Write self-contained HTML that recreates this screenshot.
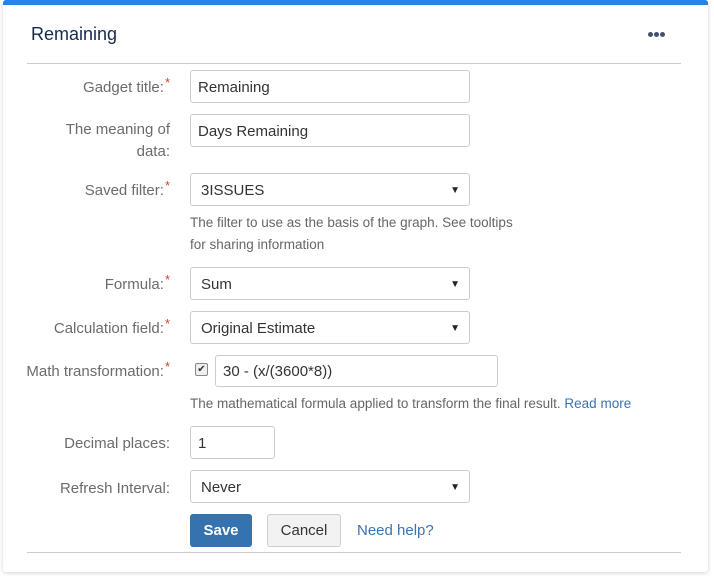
<!DOCTYPE html>
<html><head><style>
body{margin:0;width:714px;height:581px;background:#fff;font-family:"Liberation Sans",Arial,sans-serif;position:relative;overflow:hidden}
.card{position:absolute;left:3px;top:0;width:705px;height:572px;background:#fff;border-radius:3px;box-shadow:0 1px 4px rgba(0,0,0,.18);border-top:5px solid #2684e8;box-sizing:border-box}
.a{position:absolute}
.lbl{position:absolute;right:544px;font-size:15px;color:#6b6b6b;text-align:right;line-height:22px}
.lbl i{color:#d04437;font-style:normal;font-size:13px;position:relative;top:-5px;margin-left:1px}
.in{position:absolute;left:190px;width:280px;height:33px;border:1px solid #ccc;border-radius:3px;box-sizing:border-box;font-size:15px;color:#333;padding:0 7px;line-height:33px;background:#fff}
.sel{padding-left:10px}
.sel:after{content:"▼";position:absolute;right:9px;top:0;font-size:10px;color:#222}
.help{position:absolute;left:190px;font-size:13.5px;color:#666;line-height:22px}
.hr{position:absolute;left:27px;width:654px;height:1px;background:#ccc}
.dot{position:absolute;top:32px;width:5px;height:5px;border-radius:50%;background:#42526e}
</style></head><body>
<div class="card"></div>
<div class="a" style="left:31px;top:24px;font-size:18px;color:#172b4d">Remaining</div>
<div class="dot" style="left:648px"></div><div class="dot" style="left:654px"></div><div class="dot" style="left:660px"></div>
<div class="hr" style="top:63px"></div>

<div class="lbl" style="top:77px">Gadget title:<i>*</i></div>
<div class="in" style="top:70px">Remaining</div>

<div class="lbl" style="top:119px;line-height:22px">The meaning of<br>data:</div>
<div class="in" style="top:114px">Days Remaining</div>

<div class="lbl" style="top:180px">Saved filter:<i>*</i></div>
<div class="in sel" style="top:173px">3ISSUES</div>
<div class="help" style="top:212px">The filter to use as the basis of the graph. See tooltips<br>for sharing information</div>

<div class="lbl" style="top:274px">Formula:<i>*</i></div>
<div class="in sel" style="top:267px">Sum</div>

<div class="lbl" style="top:318px">Calculation field:<i>*</i></div>
<div class="in sel" style="top:311px">Original Estimate</div>

<div class="lbl" style="top:361px">Math transformation:<i>*</i></div>
<div class="a" style="left:195px;top:363px;width:11px;height:11px;border:1px solid #888;border-radius:2px;background:#eee;font-size:10px;line-height:11px;text-align:center;color:#333">✔</div>
<div class="in" style="top:355px;left:215px;width:283px;height:32px;line-height:32px">30 - (x/(3600*8))</div>
<div class="help" style="top:393px">The mathematical formula applied to transform the final result. <span style="color:#3b73af">Read more</span></div>

<div class="lbl" style="top:433px">Decimal places:</div>
<div class="in" style="top:426px;width:85px">1</div>

<div class="lbl" style="top:478px">Refresh Interval:</div>
<div class="in sel" style="top:470px">Never</div>

<div class="a" style="left:190px;top:514px;width:62px;height:33px;background:#3572b0;border-radius:3px;color:#fff;font-weight:bold;font-size:15px;line-height:33px;text-align:center">Save</div>
<div class="a" style="left:267px;top:514px;width:74px;height:33px;background:#f2f2f2;border:1px solid #ccc;box-sizing:border-box;border-radius:3px;color:#333;font-size:15px;line-height:31px;text-align:center">Cancel</div>
<div class="a" style="left:357px;top:522px;font-size:15px;color:#3b73af">Need help?</div>
<div class="hr" style="top:552px"></div>
</body></html>
